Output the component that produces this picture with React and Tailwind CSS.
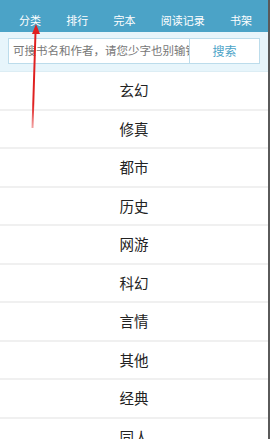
import React from "react";

const tabs = ["分类", "排行", "完本", "阅读记录", "书架"];
const categories = ["玄幻", "修真", "都市", "历史", "网游", "科幻", "言情", "其他", "经典", "同人"];

export default function App() {
	return (
		<div
			className="relative w-[270px] h-[439px] overflow-hidden bg-white border-r-2 border-[#5a5a5a]"
			style={{ fontFamily: '"Noto Sans CJK SC", "Noto Sans", sans-serif' }}
		>
			{/* Top nav */}
			<div className="h-[32px] bg-[#4ba3c7] flex items-end justify-between pl-[19px] pr-[16px] pb-[5px]">
				{tabs.map((t) => (
					<span key={t} className="text-white text-[11px] leading-[14px]">{t}</span>
				))}
			</div>

			{/* Search */}
			<div className="bg-[#e7f5fb] px-2 pt-[6px] pb-[7px] border-b border-[#dcedf4]">
				<div className="flex h-[26px] bg-white border border-[#bcdceb]">
					<div className="flex-1 min-w-0 flex items-center pl-[4px] overflow-hidden whitespace-nowrap text-[11.5px] text-[#777]">
						可搜书名和作者，请您少字也别输错字
					</div>
					<div className="w-[70px] shrink-0 border-l border-[#bcdceb] flex items-center justify-center text-[12px] text-[#4ba3c7]">
						搜索
					</div>
				</div>
			</div>

			{/* Category list */}
			<div className="flex flex-col">
				{categories.map((c) => (
					<div
						key={c}
						className="h-[38.5px] shrink-0 flex items-center justify-center border-b-2 border-[#f0f0f0] text-[14.5px] font-normal text-[#222]"
					>
						{c}
					</div>
				))}
			</div>

			{/* Red annotation arrow */}
			<svg className="absolute left-0 top-0 pointer-events-none" width="270" height="439">
				<defs>
					<linearGradient id="fade" x1="0" y1="1" x2="0" y2="0">
						<stop offset="0" stopColor="#e02020" stopOpacity="0.4" />
						<stop offset="0.25" stopColor="#e02020" stopOpacity="1" />
						<stop offset="1" stopColor="#e02020" stopOpacity="1" />
					</linearGradient>
				</defs>
				<path d="M32.5 128 L35.5 32" stroke="url(#fade)" strokeWidth="2" fill="none" />
				<path d="M36 24 L40 34 L32 34 Z" fill="#e02020" />
			</svg>
		</div>
	);
}
